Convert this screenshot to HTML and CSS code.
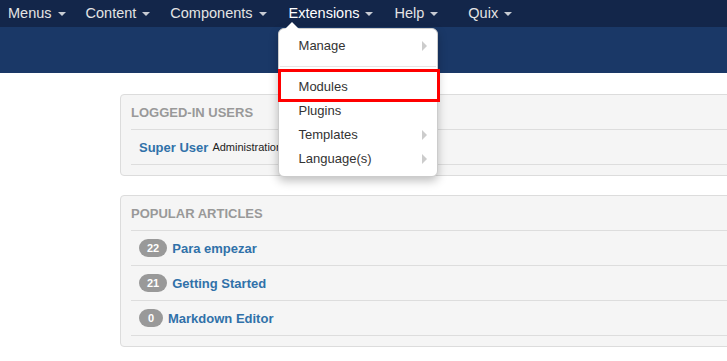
FILE: index.html
```html
<!DOCTYPE html>
<html lang="en">
  <head>
	<meta charset="UTF-8" />
	<meta name="viewport" content="width=device-width, initial-scale=1.0" />
	<title>Control Panel</title>
	<link rel="stylesheet" href="styles.css">
  </head>
  <body>

	<div class="navbar">
	  <ul class="nav">
		<li><a href="#">Menus <span class="caret"></span></a></li>
		<li><a href="#">Content <span class="caret"></span></a></li>
		<li><a href="#">Components <span class="caret"></span></a></li>
		<li class="open">
		  <a href="#">Extensions <span class="caret"></span></a>
		  <ul class="dropdown">
			<li class="sub"><a href="#">Manage</a></li>
			<li class="divider"></li>
			<li><a href="#">Modules</a></li>
			<li><a href="#">Plugins</a></li>
			<li class="sub"><a href="#">Templates</a></li>
			<li class="sub"><a href="#">Language(s)</a></li>
			<li class="highlight"></li>
		  </ul>
		</li>
		<li class="help"><a href="#">Help <span class="caret"></span></a></li>
		<li class="quix"><a href="#">Quix <span class="caret"></span></a></li>
	  </ul>
	</div>

	<div class="subhead"></div>

	<div class="main">
	  <div class="panel">
		<h2 class="panel-title">Logged-in Users</h2>
		<div class="row">
		  <a class="name" href="#">Super User</a> <small>Administration</small>
		</div>
	  </div>

	  <div class="panel">
		<h2 class="panel-title">Popular Articles</h2>
		<div class="row"><span class="badge">22</span> <a class="name" href="#">Para empezar</a></div>
		<div class="row"><span class="badge">21</span> <a class="name" href="#">Getting Started</a></div>
		<div class="row"><span class="badge">0</span> <a class="name" href="#">Markdown Editor</a></div>
	  </div>
	</div>

  </body>
</html>
```

FILE: styles.css
```css
* {
  box-sizing: border-box;
  margin: 0;
  padding: 0;
}
body {
  font-family: "Liberation Sans", Arial, sans-serif;
  background: #fff;
  overflow: hidden;
  color: #333;
}
a {
  text-decoration: none;
}
ul {
  list-style: none;
}
.navbar {
  height: 27px;
  background: #13264a;
  position: relative;
  z-index: 10;
}
.nav {
  display: flex;
  gap: 20px;
  padding-left: 8px;
}
.nav > li {
  position: relative;
}
.nav > li > a {
  display: flex;
  align-items: center;
  height: 25px;
  font-size: 14.5px;
  color: #e4e4e4;
}
.nav > li.open {
  margin-left: 2px;
}
.nav > li.open > a {
  color: #fff;
}
.nav > li.help {
  margin-left: 1px;
}
.nav > li.quix {
  margin-left: 10px;
}
.caret {
  display: inline-block;
  width: 0;
  height: 0;
  margin-left: 6px;
  margin-top: 2px;
  border-top: 4px solid #c8ccd4;
  border-left: 4px solid transparent;
  border-right: 4px solid transparent;
}
.dropdown {
  position: absolute;
  top: 28px;
  left: -11px;
  width: 160px;
  padding: 5px 0;
  background: #fff;
  border: 1px solid #ccc;
  border-radius: 6px;
  box-shadow: 0 4px 10px rgba(0, 0, 0, 0.25);
}
.dropdown:before {
  content: "";
  position: absolute;
  top: -7px;
  left: 6px;
  border-bottom: 7px solid #fff;
  border-left: 7px solid transparent;
  border-right: 7px solid transparent;
}
.dropdown li a {
  display: block;
  height: 24px;
  line-height: 24px;
  padding-left: 20px;
  font-size: 13px;
  color: #333;
}
.dropdown li.sub a {
  position: relative;
}
.dropdown li.sub a:after {
  content: "";
  position: absolute;
  right: 10px;
  top: 7px;
  border-left: 5px solid #ccc;
  border-top: 5px solid transparent;
  border-bottom: 5px solid transparent;
}
.dropdown .divider {
  height: 1px;
  margin: 8px 1px;
  background: #e5e5e5;
}
.dropdown .highlight {
  position: absolute;
  top: 40px;
  left: -1px;
  width: 162px;
  height: 33px;
  border: 3px solid #f00;
}
.subhead {
  height: 46px;
  background: #1a3867;
}
.main {
  padding: 21px 0 0 120px;
}
.panel {
  width: 700px;
  background: #f5f5f5;
  border: 1px solid #dcdcdc;
  border-radius: 4px;
  padding: 0 0 10px 10px;
  margin-bottom: 19px;
}
.panel-title {
  height: 35px;
  line-height: 35px;
  font-size: 13px;
  font-weight: bold;
  color: #999;
  text-transform: uppercase;
  border-bottom: 1px solid #ddd;
}
.row {
  height: 35px;
  display: flex;
  align-items: center;
  padding-left: 8px;
  border-bottom: 1px solid #ddd;
  font-size: 13px;
}
.name {
  font-weight: bold;
  color: #3071a9;
}
.row small {
  font-size: 11px;
  color: #222;
  margin-left: 4px;
}
.badge {
  display: inline-block;
  min-width: 24px;
  height: 18px;
  line-height: 18px;
  padding: 0 8px;
  margin-right: 5px;
  border-radius: 9px;
  background: #999;
  color: #fff;
  font-size: 11px;
  font-weight: bold;
  text-align: center;
}
```
